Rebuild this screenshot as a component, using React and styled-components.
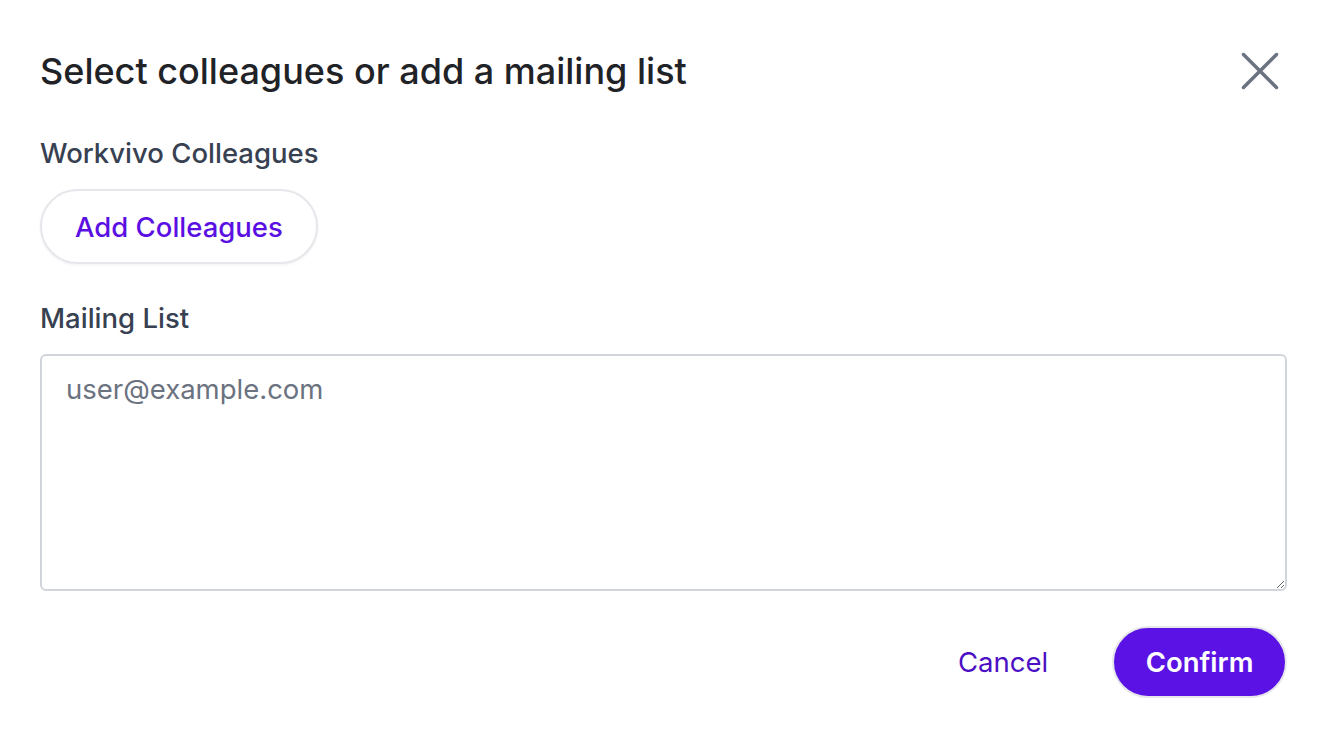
import styled, { createGlobalStyle } from 'styled-components'

const GlobalStyle = createGlobalStyle`
  html, body {
    margin: 0;
    padding: 0;
    background: #fff;
    font-family: Inter, "Noto Sans", sans-serif;
  }
  * {
    box-sizing: border-box;
  }
`

function CloseIcon() {
  return (
    <svg width="40" height="40" viewBox="0 0 40 40" fill="none" stroke="#6b7280" strokeWidth="3.5" strokeLinecap="round">
      <path d="M3.5 3.5l33 33M36.5 3.5l-33 33" />
    </svg>
  )
}

function App() {
  return (
    <>
      <GlobalStyle />
      <Modal>
        <Header>
          <Title>Select colleagues or add a mailing list</Title>
          <CloseButton aria-label="Close">
            <CloseIcon />
          </CloseButton>
        </Header>

        <Section>
          <Label>Workvivo Colleagues</Label>
          <OutlineButton>Add Colleagues</OutlineButton>
        </Section>

        <Section>
          <Label>Mailing List</Label>
          <TextArea placeholder="user@example.com" />
        </Section>

        <Footer>
          <TextButton>Cancel</TextButton>
          <PrimaryButton>Confirm</PrimaryButton>
        </Footer>
      </Modal>
    </>
  )
}

const Modal = styled.div`
  width: 1326px;
  height: 738px;
  padding: 51px 39px 0 40px;
  display: flex;
  flex-direction: column;
  background: #fff;
`

const Header = styled.div`
  display: flex;
  justify-content: space-between;
  align-items: center;
  height: 40px;
`

const Title = styled.h2`
  margin: 0;
  font-size: 36px;
  line-height: 40px;
  font-weight: 500;
  color: #1f2328;
`

const CloseButton = styled.button`
  border: none;
  background: none;
  padding: 0;
  margin-right: 7px;
  display: flex;
  cursor: pointer;
`

const Section = styled.div`
  display: flex;
  flex-direction: column;
  align-items: flex-start;
  gap: 19px;
  margin-top: 45px;

  & + & {
    margin-top: 37px;
  }
`

const Label = styled.div`
  font-size: 27.5px;
  line-height: 34px;
  font-weight: 500;
  color: #374151;
`

const OutlineButton = styled.button`
  font-family: inherit;
  font-size: 27.5px;
  font-weight: 500;
  color: #5b10e3;
  background: #fff;
  height: 75px;
  padding: 0 33px;
  border: 2px solid #e5e7eb;
  border-radius: 40px;
  box-shadow: 0 1px 3px rgba(0, 0, 0, 0.06);
  cursor: pointer;
`

const TextArea = styled.textarea`
  width: 100%;
  height: 237px;
  padding: 16px 24px;
  font-family: inherit;
  font-size: 27.5px;
  line-height: 34px;
  color: #111827;
  border: 2px solid #d1d5db;
  border-radius: 6px;
  outline: none;

  &::placeholder {
    color: #6b7280;
  }
`

const Footer = styled.div`
  display: flex;
  justify-content: flex-end;
  align-items: center;
  gap: 31px;
  margin-top: 35px;
`

const TextButton = styled.button`
  font-family: inherit;
  font-size: 27.5px;
  font-weight: 400;
  color: #4c0fc4;
  background: none;
  border: none;
  padding: 0 33px;
  height: 72px;
  cursor: pointer;
`

const PrimaryButton = styled.button`
  font-family: inherit;
  font-size: 27.5px;
  font-weight: 600;
  color: #fff;
  background: #5a13e4;
  height: 72px;
  padding: 0 31.5px;
  border: 2px solid #e5e7eb;
  border-radius: 40px;
  cursor: pointer;
`

export default App
